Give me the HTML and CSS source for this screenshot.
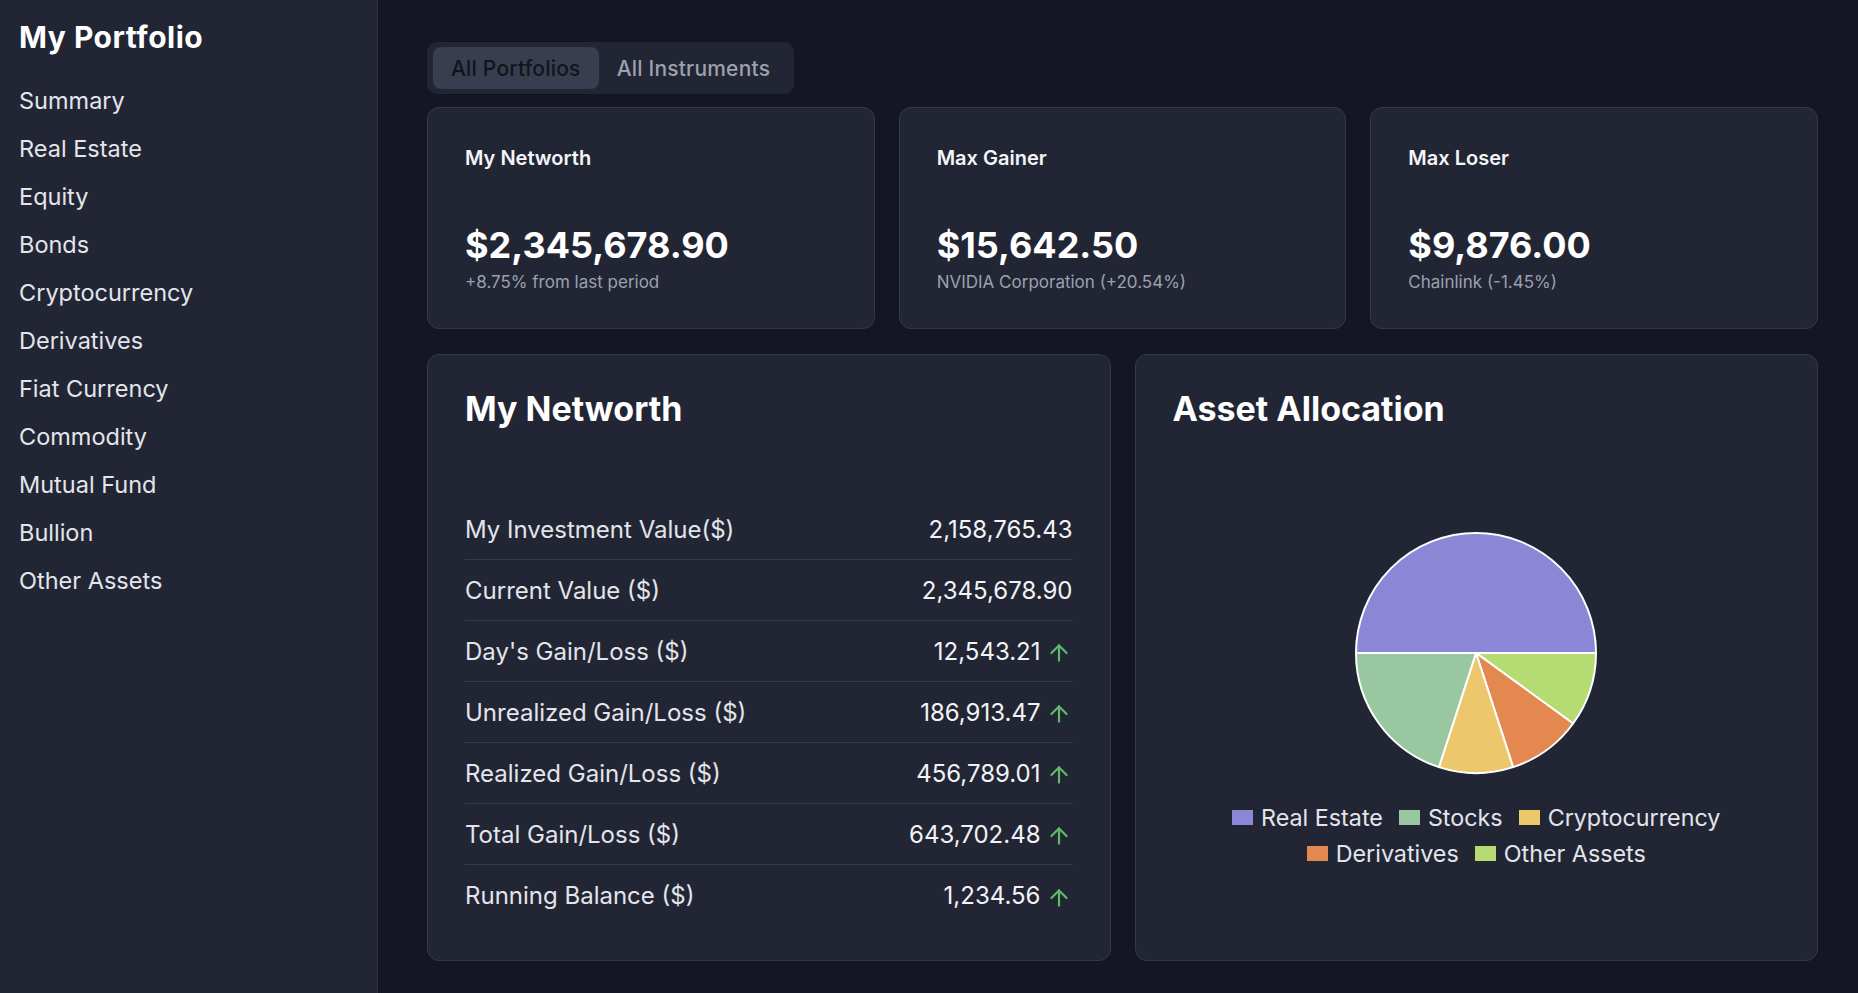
FILE: index.html
```html
<!DOCTYPE html>
<html lang="en">
<head>
<meta charset="utf-8">
<title>My Portfolio</title>
<link rel="stylesheet" href="styles.css">
</head>
<body>
<aside class="sidebar">
  <h1 class="brand">My Portfolio</h1>
  <nav class="nav">
    <a class="nav-item">Summary</a>
    <a class="nav-item">Real Estate</a>
    <a class="nav-item">Equity</a>
    <a class="nav-item">Bonds</a>
    <a class="nav-item">Cryptocurrency</a>
    <a class="nav-item">Derivatives</a>
    <a class="nav-item">Fiat Currency</a>
    <a class="nav-item">Commodity</a>
    <a class="nav-item">Mutual Fund</a>
    <a class="nav-item">Bullion</a>
    <a class="nav-item">Other Assets</a>
  </nav>
</aside>
<main class="main">
  <div class="tabs">
    <button class="tab tab-active">All Portfolios</button>
    <button class="tab">All Instruments</button>
  </div>
  <section class="stats">
    <div class="card stat">
      <div class="stat-label">My Networth</div>
      <div class="stat-value">$2,345,678.90</div>
      <div class="stat-sub">+8.75% from last period</div>
    </div>
    <div class="card stat">
      <div class="stat-label">Max Gainer</div>
      <div class="stat-value">$15,642.50</div>
      <div class="stat-sub">NVIDIA Corporation (+20.54%)</div>
    </div>
    <div class="card stat">
      <div class="stat-label">Max Loser</div>
      <div class="stat-value">$9,876.00</div>
      <div class="stat-sub">Chainlink (-1.45%)</div>
    </div>
  </section>
  <section class="panels">
    <div class="card panel">
      <h2 class="panel-title">My Networth</h2>
      <div class="rows">
        <div class="row"><span class="row-label">My Investment Value($)</span><span class="row-value">2,158,765.43</span></div>
        <div class="row"><span class="row-label">Current Value ($)</span><span class="row-value">2,345,678.90</span></div>
        <div class="row"><span class="row-label">Day's Gain/Loss ($)</span><span class="row-value">12,543.21<svg class="up" viewBox="0 0 24 24"><path d="m5 12 7-7 7 7"/><path d="M12 19V5"/></svg></span></div>
        <div class="row"><span class="row-label">Unrealized Gain/Loss ($)</span><span class="row-value">186,913.47<svg class="up" viewBox="0 0 24 24"><path d="m5 12 7-7 7 7"/><path d="M12 19V5"/></svg></span></div>
        <div class="row"><span class="row-label">Realized Gain/Loss ($)</span><span class="row-value">456,789.01<svg class="up" viewBox="0 0 24 24"><path d="m5 12 7-7 7 7"/><path d="M12 19V5"/></svg></span></div>
        <div class="row"><span class="row-label">Total Gain/Loss ($)</span><span class="row-value">643,702.48<svg class="up" viewBox="0 0 24 24"><path d="m5 12 7-7 7 7"/><path d="M12 19V5"/></svg></span></div>
        <div class="row"><span class="row-label">Running Balance ($)</span><span class="row-value">1,234.56<svg class="up" viewBox="0 0 24 24"><path d="m5 12 7-7 7 7"/><path d="M12 19V5"/></svg></span></div>
      </div>
    </div>
    <div class="card panel">
      <h2 class="panel-title">Asset Allocation</h2>
      <div class="chart">
        <svg class="pie" viewBox="0 0 244 244" width="244" height="244">
          <path class="s-re" d="M122 122 L2 122 A120 120 0 0 1 242 122 Z"/>
          <path class="s-oa" d="M122 122 L242 122 A120 120 0 0 1 219.08 192.53 Z"/>
          <path class="s-de" d="M122 122 L219.08 192.53 A120 120 0 0 1 159.08 236.13 Z"/>
          <path class="s-cr" d="M122 122 L159.08 236.13 A120 120 0 0 1 84.92 236.13 Z"/>
          <path class="s-st" d="M122 122 L84.92 236.13 A120 120 0 0 1 2 122 Z"/>
        </svg>
      </div>
      <div class="legend">
        <div class="legend-row">
          <span class="legend-item"><i class="swatch c-re"></i>Real Estate</span>
          <span class="legend-item"><i class="swatch c-st"></i>Stocks</span>
          <span class="legend-item"><i class="swatch c-cr"></i>Cryptocurrency</span>
        </div>
        <div class="legend-row">
          <span class="legend-item"><i class="swatch c-de"></i>Derivatives</span>
          <span class="legend-item"><i class="swatch c-oa"></i>Other Assets</span>
        </div>
      </div>
    </div>
  </section>
</main>
</body>
</html>
```

FILE: styles.css
```css
* { box-sizing: border-box; }
html, body { height: 100%; }
body {
  margin: 0;
  display: flex;
  background: #141723;
  color: #e6e8ee;
  font-family: Inter, "Noto Sans", "Liberation Sans", sans-serif;
  overflow: hidden;
}

.sidebar {
  width: 378px;
  flex: none;
  height: 100%;
  background: #222634;
  border-right: 1px solid #2b3040;
  padding: 20px 19px;
}
.brand {
  margin: 0;
  font-size: 30px;
  line-height: 34px;
  font-weight: 700;
  letter-spacing: 0.5px;
  color: #ffffff;
}
.nav {
  margin-top: 23px;
  display: flex;
  flex-direction: column;
}
.nav-item {
  font-size: 23.5px;
  line-height: 48px;
  color: #e3e5eb;
}

.main {
  flex: 1;
  padding: 42px 40px 0 49px;
}

.tabs {
  display: inline-flex;
  background: #222634;
  border-radius: 10px;
  padding: 5px 6px;
  margin-bottom: 13px;
}
.tab {
  border: 0;
  background: transparent;
  font-family: inherit;
  font-size: 21px;
  letter-spacing: 0.2px;
  font-weight: 500;
  height: 42px;
  padding: 0 18px;
  border-radius: 8px;
  color: #9ca1ad;
}
.tab-active {
  background: #383d4f;
  color: #12141c;
}

.card {
  background: #222634;
  border: 1px solid #343948;
  border-radius: 12px;
}

.stats {
  display: grid;
  grid-template-columns: repeat(3, 1fr);
  gap: 24px;
}
.stat {
  padding: 38px 37px 36px;
}
.stat-label {
  font-size: 20px;
  line-height: 24px;
  font-weight: 600;
  color: #f4f5f8;
}
.stat-value {
  margin-top: 53px;
  font-size: 36px;
  line-height: 44px;
  font-weight: 700;
  color: #ffffff;
}
.stat-sub {
  margin-top: 5px;
  font-size: 17px;
  line-height: 20px;
  color: #9ca1ad;
}

.panels {
  margin-top: 25px;
  display: grid;
  grid-template-columns: repeat(2, 1fr);
  gap: 24px;
}
.panel {
  height: 607px;
  padding: 34px 37px 35px;
}
.panel-title {
  margin: 0;
  font-size: 34px;
  line-height: 40px;
  font-weight: 700;
  color: #ffffff;
}

.rows {
  margin-top: 70px;
}
.row {
  display: flex;
  justify-content: space-between;
  align-items: center;
  height: 61px;
  border-bottom: 1px solid #363b4a;
  font-size: 24px;
}
.row:last-child { border-bottom: 0; }
.row-label { color: #e3e5eb; }
.row-value {
  display: flex;
  align-items: center;
  color: #f2f3f6;
}
.up {
  width: 26px;
  height: 26px;
  margin-left: 5px;
  margin-right: 1px;
  margin-top: 4px;
  fill: none;
  stroke: #5ebc69;
  stroke-width: 2;
  stroke-linecap: round;
  stroke-linejoin: round;
}

.chart {
  margin-top: 102px;
  display: flex;
  justify-content: center;
}
.pie { display: block; }
.pie path { stroke: #ffffff; stroke-width: 2; stroke-linejoin: round; }
.s-re { fill: #8c86d6; }
.s-st { fill: #99c8a0; }
.s-cr { fill: #ecc76b; }
.s-de { fill: #e3884f; }
.s-oa { fill: #b5dc73; }

.legend {
  margin-top: 24px;
  display: flex;
  flex-direction: column;
  align-items: center;
}
.legend-row {
  display: flex;
  gap: 16px;
  height: 36px;
  align-items: center;
}
.legend-item {
  display: flex;
  align-items: center;
  gap: 8px;
  font-size: 23.3px;
  color: #e3e5eb;
}
.swatch {
  display: block;
  width: 21px;
  height: 15px;
}
.c-re { background: #8c86d6; }
.c-st { background: #99c8a0; }
.c-cr { background: #ecc76b; }
.c-de { background: #e3884f; }
.c-oa { background: #b5dc73; }
```
